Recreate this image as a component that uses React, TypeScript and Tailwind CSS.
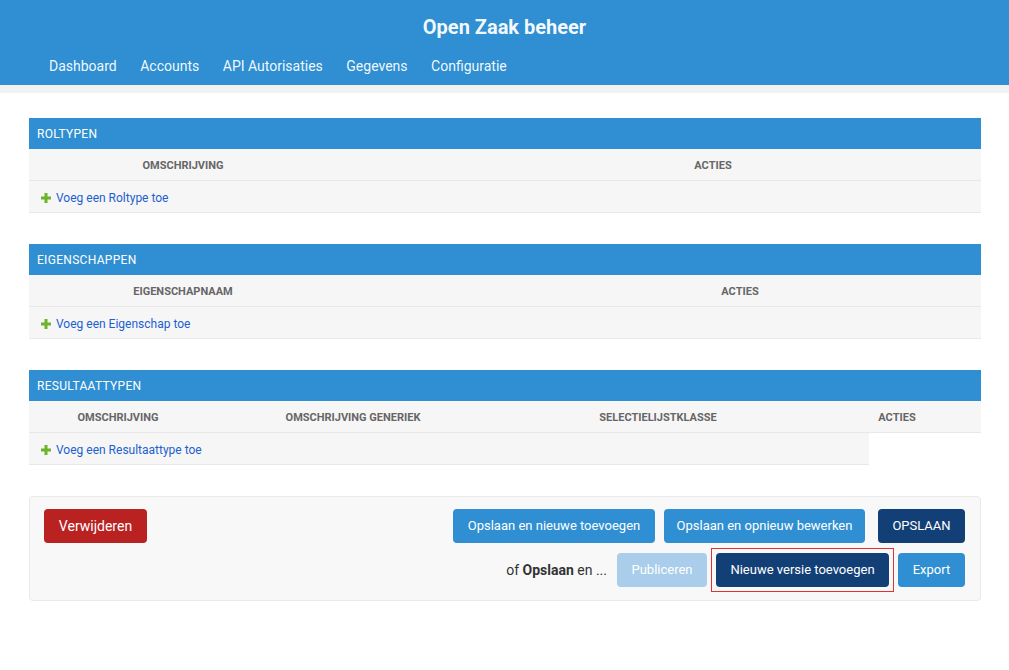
import React from "react";

type Col = { w: number; label: string };

interface ModuleProps {
  title: string;
  cols: Col[];
  addLabel: string;
  addWidth?: number;
}

const font = { fontFamily: "Roboto, 'Liberation Sans', sans-serif" };

function PlusIcon() {
  return (
    <svg width="10" height="10" viewBox="0 0 10 10" className="flex-shrink-0">
      <path d="M3.5 0h3v3.5H10v3H6.5V10h-3V6.5H0v-3h3.5z" fill="#6cb42b" />
    </svg>
  );
}

function Module({ title, cols, addLabel, addWidth }: ModuleProps) {
  return (
    <div className="w-[952px]">
      <div className="h-[31px] bg-[#2f8fd2] text-white text-[12px] tracking-[0.3px] flex items-center px-2">
        {title}
      </div>
      <div className="h-[32px] bg-[#f6f6f6] border-b border-[#e8e8e8] flex items-center pt-[3px]">
        {cols.map((c, i) => (
          <div
            key={i}
            className="text-center text-[11px] font-bold text-[#666]"
            style={{ width: c.w }}
          >
            {c.label}
          </div>
        ))}
      </div>
      <div
        className="h-[32px] bg-[#f6f6f6] border-b border-[#e8e8e8] flex items-center gap-[5px] pl-[12px] pt-[2px]"
        style={{ width: addWidth ?? 952 }}
      >
        <PlusIcon />
        <span className="text-[12px] text-[#1d5fcf]">{addLabel}</span>
      </div>
    </div>
  );
}

export default function App() {
  const navLinks = ["Dashboard", "Accounts", "API Autorisaties", "Gegevens", "Configuratie"];

  return (
    <div className="min-h-screen bg-white" style={font}>
      {/* Header */}
      <header className="h-[85px] bg-[#2f8fd2] flex flex-col">
        <h1 className="text-center text-white/95 font-bold text-[20px] pt-[14px] leading-[26px]">
          Open Zaak beheer
        </h1>
        <nav className="flex gap-[23.5px] pl-[49px] mt-[16px] text-[14px] text-white/95 leading-[20px]">
          {navLinks.map(l => (
            <span key={l}>{l}</span>
          ))}
        </nav>
      </header>
      <div className="h-[8px] bg-[#f2f2f2]" />

      {/* Content */}
      <div className="pl-[29px] pt-[25px] flex flex-col gap-[31px]">
        <Module
          title="ROLTYPEN"
          cols={[
            { w: 308, label: "OMSCHRIJVING" },
            { w: 108, label: "" },
            { w: 536, label: "ACTIES" },
          ]}
          addLabel="Voeg een Roltype toe"
        />
        <Module
          title="EIGENSCHAPPEN"
          cols={[
            { w: 308, label: "EIGENSCHAPNAAM" },
            { w: 162, label: "" },
            { w: 482, label: "ACTIES" },
          ]}
          addLabel="Voeg een Eigenschap toe"
        />
        <Module
          title="RESULTAATTYPEN"
          cols={[
            { w: 178, label: "OMSCHRIJVING" },
            { w: 292, label: "OMSCHRIJVING GENERIEK" },
            { w: 318, label: "SELECTIELIJSTKLASSE" },
            { w: 160, label: "ACTIES" },
          ]}
          addLabel="Voeg een Resultaattype toe"
          addWidth={840}
        />

        {/* Submit row */}
        <div className="w-[952px] bg-[#f8f8f8] border border-[#eaeaea] rounded-[4px] pl-[14px] pr-[15px] pt-[12px] pb-[13px] flex justify-between">
          <button className="w-[103px] h-[34px] rounded-[4px] bg-[#ba2121] text-white text-[14px]">
            Verwijderen
          </button>
          <div className="flex flex-col items-end gap-[10px] text-[13px]">
            <div className="flex">
              <button className="w-[202px] h-[34px] rounded-[4px] bg-[#2f8fd2] text-white">
                Opslaan en nieuwe toevoegen
              </button>
              <button className="ml-[9px] w-[201px] h-[34px] rounded-[4px] bg-[#2f8fd2] text-white">
                Opslaan en opnieuw bewerken
              </button>
              <button className="ml-[13px] w-[87px] h-[34px] rounded-[4px] bg-[#133f77] text-white">
                OPSLAAN
              </button>
            </div>
            <div className="flex items-center">
              <span className="text-[14px] text-[#333] mr-[10px]">
                of <b>Opslaan</b> en ...
              </span>
              <button className="w-[90px] h-[34px] rounded-[4px] bg-[#a9cdea] text-white">
                Publiceren
              </button>
              <div className="relative ml-[9px]">
                <span className="absolute -inset-[5px] border border-[#e53030] pointer-events-none" />
                <button className="w-[173px] h-[34px] rounded-[4px] bg-[#133f77] text-white">
                  Nieuwe versie toevoegen
                </button>
              </div>
              <button className="ml-[9px] w-[67px] h-[34px] rounded-[4px] bg-[#2f8fd2] text-white">
                Export
              </button>
            </div>
          </div>
        </div>
      </div>
    </div>
  );
}
